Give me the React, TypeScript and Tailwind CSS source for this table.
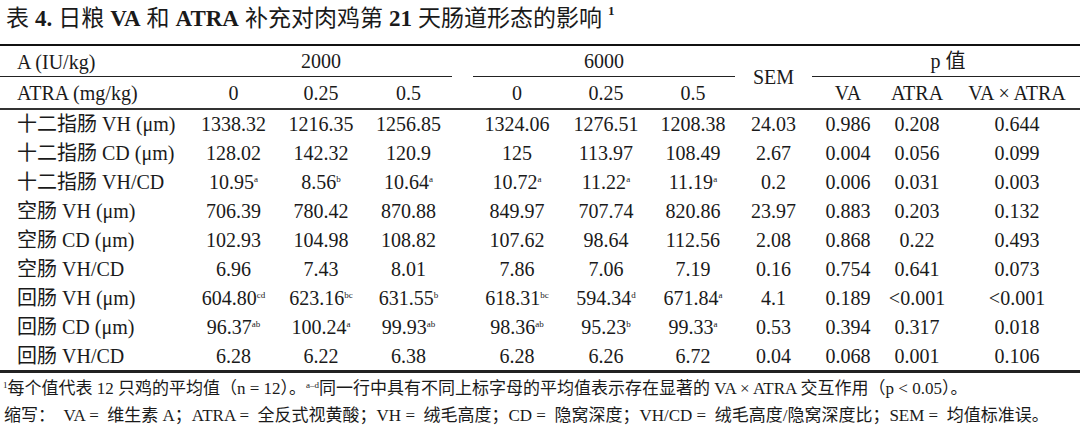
import React from "react";

const font = { fontFamily: '"Liberation Serif", "Noto Sans CJK SC", serif' };

type Cell = { v: string; s?: string };
const c = (v: string, s?: string): Cell => ({ v, s });

const rows: { label: string; cells: Cell[] }[] = [
  { label: "十二指肠 VH (μm)", cells: [c("1338.32"), c("1216.35"), c("1256.85"), c("1324.06"), c("1276.51"), c("1208.38"), c("24.03"), c("0.986"), c("0.208"), c("0.644")] },
  { label: "十二指肠 CD (μm)", cells: [c("128.02"), c("142.32"), c("120.9"), c("125"), c("113.97"), c("108.49"), c("2.67"), c("0.004"), c("0.056"), c("0.099")] },
  { label: "十二指肠 VH/CD", cells: [c("10.95", "a"), c("8.56", "b"), c("10.64", "a"), c("10.72", "a"), c("11.22", "a"), c("11.19", "a"), c("0.2"), c("0.006"), c("0.031"), c("0.003")] },
  { label: "空肠 VH (μm)", cells: [c("706.39"), c("780.42"), c("870.88"), c("849.97"), c("707.74"), c("820.86"), c("23.97"), c("0.883"), c("0.203"), c("0.132")] },
  { label: "空肠 CD (μm)", cells: [c("102.93"), c("104.98"), c("108.82"), c("107.62"), c("98.64"), c("112.56"), c("2.08"), c("0.868"), c("0.22"), c("0.493")] },
  { label: "空肠 VH/CD", cells: [c("6.96"), c("7.43"), c("8.01"), c("7.86"), c("7.06"), c("7.19"), c("0.16"), c("0.754"), c("0.641"), c("0.073")] },
  { label: "回肠 VH (μm)", cells: [c("604.80", "cd"), c("623.16", "bc"), c("631.55", "b"), c("618.31", "bc"), c("594.34", "d"), c("671.84", "a"), c("4.1"), c("0.189"), c("<0.001"), c("<0.001")] },
  { label: "回肠 CD (μm)", cells: [c("96.37", "ab"), c("100.24", "a"), c("99.93", "ab"), c("98.36", "ab"), c("95.23", "b"), c("99.33", "a"), c("0.53"), c("0.394"), c("0.317"), c("0.018")] },
  { label: "回肠 VH/CD", cells: [c("6.28"), c("6.22"), c("6.38"), c("6.28"), c("6.26"), c("6.72"), c("0.04"), c("0.068"), c("0.001"), c("0.106")] },
];

const grid =
  "grid grid-cols-[190px_87px_88px_87px_21px_88px_90px_84px_77px_72px_66px_130px]";

function Val({ cell }: { cell: Cell }) {
  return (
    <span className="whitespace-nowrap">
      {cell.v}
      {cell.s && (
        <sup className="text-[9px] top-[-7px] leading-none">{cell.s}</sup>
      )}
    </span>
  );
}

export default function App() {
  return (
    <div className="w-[1080px] h-[435px] bg-white text-[#1a1a1a] overflow-hidden" style={font}>
      <div className="h-[44px] flex items-center pl-[6px] text-[23px] leading-none pb-[8px] whitespace-nowrap">
        <span>表</span>
        <span className="font-bold ml-[6px]">4.</span>
        <span className="ml-[6px]">日粮</span>
        <span className="font-bold ml-[6px]">VA</span>
        <span className="ml-[6px]">和</span>
        <span className="font-bold ml-[6px]">ATRA</span>
        <span className="ml-[6px]">补充对肉鸡第</span>
        <span className="font-bold ml-[6px]">21</span>
        <span className="ml-[6px]">天肠道形态的影响</span>
        <sup className="font-bold text-[13px] ml-[6px] top-[-7px]">1</sup>
      </div>
      <div className="h-[2px] bg-[#111]" />
      <div className={`${grid} text-[20px] leading-none`}>
        <div className="col-start-1 row-start-1 h-[31px] flex items-center pl-[17px]">A (IU/kg)</div>
        <div className="col-start-2 col-span-3 row-start-1 h-[31px] flex items-center justify-center border-b border-[#222]">2000</div>
        <div className="col-start-1 row-start-1 h-[31px] border-b border-[#222]" />
        <div className="col-start-5 row-start-1 h-[31px]" />
        <div className="col-start-6 col-span-3 row-start-1 h-[31px] flex items-center justify-center border-b border-[#222]">6000</div>
        <div className="col-start-9 row-start-1 row-span-2 flex items-center justify-center">SEM</div>
        <div className="col-start-10 col-span-3 row-start-1 h-[31px] flex items-center justify-center border-b border-[#222] pl-[4px]">p 值</div>
        <div className="col-start-1 row-start-2 h-[31px] flex items-center pl-[17px]">ATRA (mg/kg)</div>
        <div className="col-start-2 row-start-2 flex items-center justify-center">0</div>
        <div className="col-start-3 row-start-2 flex items-center justify-center">0.25</div>
        <div className="col-start-4 row-start-2 flex items-center justify-center">0.5</div>
        <div className="col-start-6 row-start-2 flex items-center justify-center">0</div>
        <div className="col-start-7 row-start-2 flex items-center justify-center">0.25</div>
        <div className="col-start-8 row-start-2 flex items-center justify-center">0.5</div>
        <div className="col-start-10 row-start-2 flex items-center justify-center">VA</div>
        <div className="col-start-11 row-start-2 flex items-center justify-center">ATRA</div>
        <div className="col-start-12 row-start-2 flex items-center justify-center pl-[4px]">VA × ATRA</div>
      </div>
      <div className="h-[2px] bg-[#333]" />
      <div className="text-[20px] leading-none">
        {rows.map((r) => (
          <div key={r.label} className={`${grid} h-[28.9px]`}>
            <div className="flex items-center pl-[17px]">{r.label}</div>
            {r.cells.slice(0, 3).map((cell, i) => (
              <div key={i} className="flex items-center justify-center">
                <Val cell={cell} />
              </div>
            ))}
            <div />
            {r.cells.slice(3).map((cell, i) => (
              <div key={i} className={`flex items-center justify-center ${i === 6 ? "pl-[4px]" : ""}`}>
                <Val cell={cell} />
              </div>
            ))}
          </div>
        ))}
      </div>
      <div className="h-[3px] bg-[#222]" />
      <div className="text-[17px] leading-none pl-[3px] whitespace-nowrap">
        <div className="h-[30px] flex items-center">
          <span>
            <sup className="text-[9px] top-[-6px]">1</sup>每个值代表 12 只鸡的平均值（n = 12）。<sup className="text-[9px] top-[-6px]">a–d</sup>同一行中具有不同上标字母的平均值表示存在显著的 VA × ATRA 交互作用（p &lt; 0.05）。
          </span>
        </div>
        <div className="h-[24px] flex items-center pl-[1px]">
          缩写：&nbsp;&nbsp;VA = &nbsp;维生素 A；ATRA = &nbsp;全反式视黄酸；VH = &nbsp;绒毛高度；CD = &nbsp;隐窝深度；VH/CD = &nbsp;绒毛高度/隐窝深度比；SEM = &nbsp;均值标准误。
        </div>
      </div>
    </div>
  );
}
